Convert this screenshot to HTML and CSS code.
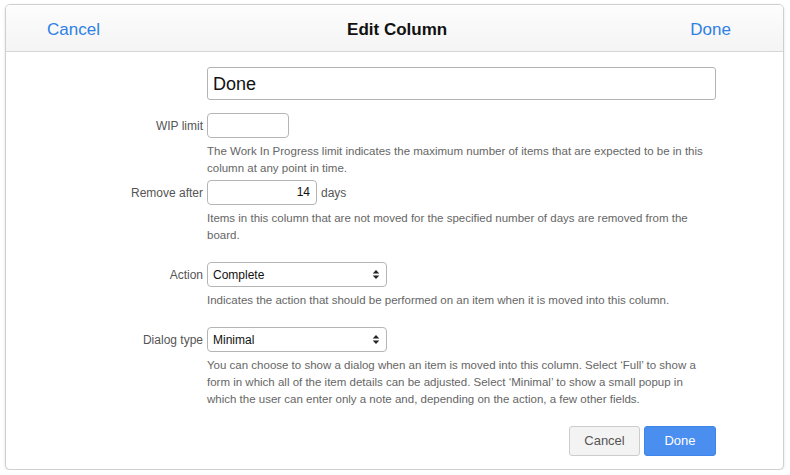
FILE: index.html
```html
<!DOCTYPE html>
<html>
<head>
<meta charset="utf-8">
<link rel="stylesheet" href="styles.css">
</head>
<body>
<div class="dialog">
  <div class="header">
    <span class="hlink">Cancel</span>
    <span class="title">Edit Column</span>
    <span class="hlink">Done</span>
  </div>
  <div class="form">
    <div class="row name-row">
      <div class="label"></div>
      <div class="field"><div class="name-input">Done</div></div>
    </div>
    <div class="row r-wip">
      <div class="label">WIP limit</div>
      <div class="field"><div class="input wip"></div></div>
    </div>
    <div class="row">
      <div></div>
      <div class="help">The Work In Progress limit indicates the maximum number of items that are expected to be in this column at any point in time.</div>
    </div>
    <div class="row r-remove">
      <div class="label">Remove after</div>
      <div class="field"><div class="input days">14</div><span class="unit">days</span></div>
    </div>
    <div class="row">
      <div></div>
      <div class="help">Items in this column that are not moved for the specified number of days are removed from the board.</div>
    </div>
    <div class="row r-action">
      <div class="label">Action</div>
      <div class="field"><div class="select"><span>Complete</span>
        <svg width="8" height="11" viewBox="0 0 8 11"><path d="M4 1 L7.3 4.5 H0.7 Z M4 10 L7.3 6.5 H0.7 Z" fill="#222"/></svg></div></div>
    </div>
    <div class="row">
      <div></div>
      <div class="help">Indicates the action that should be performed on an item when it is moved into this column.</div>
    </div>
    <div class="row r-dialog">
      <div class="label">Dialog type</div>
      <div class="field"><div class="select"><span>Minimal</span>
        <svg width="8" height="11" viewBox="0 0 8 11"><path d="M4 1 L7.3 4.5 H0.7 Z M4 10 L7.3 6.5 H0.7 Z" fill="#222"/></svg></div></div>
    </div>
    <div class="row">
      <div></div>
      <div class="help">You can choose to show a dialog when an item is moved into this column. Select ‘Full’ to show a form in which all of the item details can be adjusted. Select ‘Minimal’ to show a small popup in which the user can enter only a note and, depending on the action, a few other fields.</div>
    </div>
    <div class="row buttons-row">
      <div></div>
      <div class="buttons">
        <span class="btn cancel">Cancel</span>
        <span class="btn done">Done</span>
      </div>
    </div>
  </div>
</div>
</body>
</html>
```
FILE: styles.css
```css
html, body {
  margin: 0;
  padding: 0;
  background: #ffffff;
}
body {
  font-family: "Liberation Sans", Arial, Helvetica, sans-serif;
  padding: 4px 0 0 5px;
}
.dialog {
  width: 777px;
  height: 464px;
  border: 1px solid #cfcfcf;
  border-radius: 5px;
  box-shadow: 0 1px 3px rgba(0,0,0,0.12);
  background: #fff;
  overflow: hidden;
  box-sizing: content-box;
}
.header {
  box-sizing: border-box;
  height: 47px;
  border-bottom: 1px solid #d6d6d6;
  background: linear-gradient(#fdfdfd, #f4f4f4);
  display: flex;
  align-items: center;
  justify-content: space-between;
  padding: 4px 52px 0 41px;
  font-size: 17px;
}
.hlink {
  color: #2f80e4;
}
.title {
  font-weight: bold;
  color: #111;
  margin-left: 4px;
}
.form {
  padding-top: 15px;
}
.row {
  display: grid;
  grid-template-columns: 197px 509px;
  column-gap: 4px;
  align-items: center;
}
.label {
  text-align: right;
  font-size: 12px;
  color: #555;
}
.field {
  display: flex;
  align-items: center;
}
.name-input {
  box-sizing: border-box;
  width: 509px;
  height: 33px;
  border: 1px solid #b3b3b3;
  border-radius: 3px;
  font-size: 18px;
  color: #111;
  padding: 2px 0 0 5px;
  line-height: 29px;
}
.r-wip { margin-top: 13px; }
.input {
  box-sizing: border-box;
  height: 25px;
  border: 1px solid #b5b5b5;
  border-radius: 4px;
  font-size: 12px;
  color: #111;
  line-height: 23px;
}
.wip { width: 82px; }
.days {
  width: 110px;
  text-align: right;
  padding-right: 6px;
}
.unit {
  font-size: 12px;
  color: #555;
  margin-left: 4px;
}
.help {
  font-size: 11.5px;
  line-height: 17px;
  color: #666;
  margin-top: 5px;
  max-width: 504px;
}
.r-remove { margin-top: 3px; }
.r-action { margin-top: 18px; }
.r-dialog { margin-top: 18px; }
.select {
  box-sizing: border-box;
  width: 180px;
  height: 25px;
  border: 1px solid #b5b5b5;
  border-radius: 4px;
  font-size: 12px;
  color: #111;
  display: flex;
  align-items: center;
  justify-content: space-between;
  padding: 0 6px 0 5px;
}
.select svg { display: block; }
.buttons-row { margin-top: 18px; }
.buttons {
  display: flex;
  justify-content: flex-end;
  gap: 4px;
}
.btn {
  box-sizing: border-box;
  height: 30px;
  line-height: 28px;
  font-size: 13px;
  text-align: center;
  border-radius: 3px;
}
.cancel {
  width: 71px;
  background: #f3f3f3;
  border: 1px solid #cccccc;
  color: #555;
}
.done {
  width: 72px;
  background: #4a8ef0;
  border: 1px solid #3f84e8;
  color: #fff;
}
```
